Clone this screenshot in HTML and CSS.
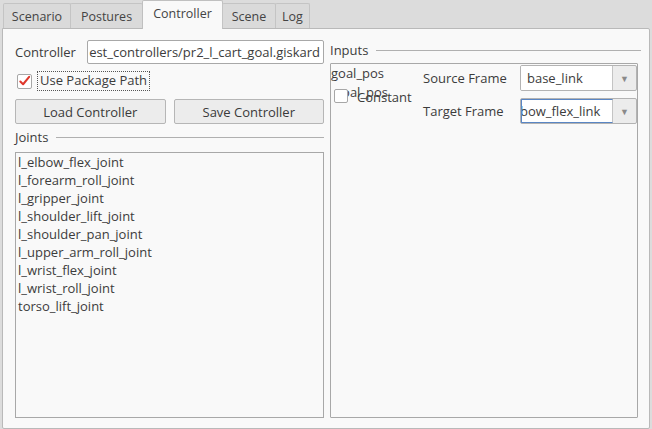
FILE: index.html
```html
<!DOCTYPE html>
<html>
<head>
<meta charset="utf-8">
<link rel="stylesheet" href="styles.css">
</head>
<body>
<div class="window">
  <div class="tabbar">
    <div class="tab t-scenario">Scenario</div>
    <div class="tab t-postures">Postures</div>
    <div class="tab active t-controller">Controller</div>
    <div class="tab t-scene">Scene</div>
    <div class="tab t-log">Log</div>
  </div>
  <div class="pane">
    <div class="col left">
      <div class="row ctl-row">
        <span class="lbl">Controller</span>
        <div class="lineedit"><span class="le-text">est_controllers/pr2_l_cart_goal.giskard</span></div>
      </div>
      <div class="row chk-row">
        <span class="checkbox checked">
          <svg width="14" height="14" viewBox="0 0 14 14"><path d="M2.5 7.5 L5.5 10.5 L12 2.5" fill="none" stroke="#df382c" stroke-width="2.2" stroke-linecap="round" stroke-linejoin="round"/></svg>
        </span>
        <span class="focus">Use Package Path</span>
      </div>
      <div class="row btn-row">
        <div class="btn">Load Controller</div>
        <div class="btn">Save Controller</div>
      </div>
      <div class="group-title"><span>Joints</span><i></i></div>
      <div class="listbox">
        <div>l_elbow_flex_joint</div>
        <div>l_forearm_roll_joint</div>
        <div>l_gripper_joint</div>
        <div>l_shoulder_lift_joint</div>
        <div>l_shoulder_pan_joint</div>
        <div>l_upper_arm_roll_joint</div>
        <div>l_wrist_flex_joint</div>
        <div>l_wrist_roll_joint</div>
        <div>torso_lift_joint</div>
      </div>
    </div>
    <div class="col right">
      <div class="group-title inputs-title"><span>Inputs</span><i></i></div>
      <div class="inputs-box">
        <div class="input-item">
          <div class="ii-left">
            <div class="ii-name">goal_pos</div>
            <span class="ghost">goal_pos</span>
            <div class="ii-const">
              <span class="checkbox small"></span>
              <span class="const-lbl">Constant</span>
            </div>
          </div>
          <div class="ii-form">
            <div class="frow">
              <span class="flbl">Source Frame</span>
              <div class="combo"><span class="ctext">base_link</span><span class="carrow">▼</span></div>
            </div>
            <div class="frow">
              <span class="flbl">Target Frame</span>
              <div class="combo focused"><span class="ctext clip"><span class="cinner">bow_flex_link</span></span><span class="carrow">▼</span></div>
            </div>
          </div>
        </div>
      </div>
    </div>
  </div>
</div>
</body>
</html>
```
FILE: styles.css
```css
* { box-sizing: border-box; }
html, body {
  margin: 0;
  padding: 0;
  width: 652px;
  height: 429px;
  background: #dcdcdc;
  font-family: "Open Sans", "Noto Sans", sans-serif;
  font-size: 12.5px;
  color: #3c3c3c;
  overflow: hidden;
}
.window {
  display: flex;
  flex-direction: column;
  width: 652px;
  height: 429px;
  padding: 0 2px 0 2px;
}
.tabbar {
  display: flex;
  align-items: flex-end;
  height: 28px;
  padding-left: 1px;
  position: relative;
  z-index: 2;
}
.tab {
  height: 25px;
  display: flex;
  align-items: center;
  justify-content: center;
  background: #dadada;
  border: 1px solid #c4c4c4;
  border-bottom: none;
  border-radius: 2px 2px 0 0;
  margin-right: -1px;
  color: #444;
  font-size: 12.5px;
}
.t-scenario { width: 68px; }
.t-postures { width: 73px; }
.t-controller { width: 81px; }
.t-scene { width: 54px; }
.t-log { width: 35px; }
.tab.active {
  background: #f9f9f9;
  border-color: #c0c0c0;
  padding-bottom: 4px;
  margin-bottom: -1px;
  height: 29px;
}
.pane {
  flex: 1;
  background: #f9f9f9;
  border: 1px solid #b9b9b9;
  border-radius: 0 2px 2px 2px;
  display: flex;
  padding: 11px 11px 10px 12px;
  gap: 6px;
}
.col { display: flex; flex-direction: column; }
.left { width: 309px; }
.right { flex: 1; padding-top: 2px; }
.row { display: flex; align-items: center; }
.ctl-row { height: 24px; gap: 11px; }
.lbl { padding-left: 0px; font-size: 13px; }
.lineedit {
  flex: 1;
  height: 24px;
  border: 1px solid #a8a8a8;
  border-radius: 2px;
  background: #fff;
  overflow: hidden;
  display: flex;
  align-items: center;
  justify-content: flex-end;
  padding-right: 3px;
  white-space: nowrap;
  font-size: 13px;
}
.chk-row { margin-top: 6px; height: 22px; gap: 5px; padding-left: 2px; }
.checkbox {
  width: 15px;
  height: 15px;
  border: 1px solid #a7a7a7;
  border-radius: 2px;
  background: #fff;
  display: inline-flex;
  align-items: center;
  justify-content: center;
  position: relative;
  z-index: 1;
}
.checkbox svg { display: block; }
.focus {
  border: 1px dotted #555;
  padding: 1px 2px 2px 2px;
  font-size: 13px;
  line-height: 15px;
}
.btn-row { margin-top: 7px; gap: 8px; }
.btn {
  flex: 1;
  height: 25px;
  border: 1px solid #b6b6b6;
  border-radius: 2px;
  background: #ececec;
  display: flex;
  align-items: center;
  justify-content: center;
  font-size: 13px;
  color: #3a3a3a;
}
.group-title {
  display: flex;
  align-items: center;
  gap: 8px;
  margin-top: 5px;
  height: 16px;
  font-size: 13px;
}
.group-title i {
  flex: 1;
  height: 1px;
  background: #b0b0b0;
  margin-top: 1px;
}
.listbox {
  flex: 1;
  margin-top: 7px;
  border: 1px solid #a8a8a8;
  background: #f9f9f9;
  padding: 0px 2px;
  font-size: 13px;
  line-height: 18px;
}
.inputs-title { margin-top: 0; margin-right: -3px; }
.inputs-box {
  flex: 1;
  margin-top: 5px;
  border: 1px solid #a8a8a8;
  border-radius: 1px;
}
.input-item { display: flex; }
.ii-left { width: 92px; position: relative; padding-top: 0px; }
.ii-name { font-size: 13px; line-height: 18px; }
.ghost {
  position: absolute;
  left: 4px;
  top: 19px;
  font-size: 13px;
  line-height: 18px;
}
.ii-const { display: flex; align-items: center; margin-top: 7px; padding-left: 3px; position: relative; }
.checkbox.small { width: 14px; height: 14px; }
.const-lbl {
  position: absolute;
  left: 26px;
  top: -1px;
  font-size: 13px;
  line-height: 18px;
}
.ii-form { flex: 1; display: flex; flex-direction: column; gap: 7px; padding-top: 1px; padding-right: 0px; }
.frow { display: flex; align-items: center; }
.flbl { width: 97px; font-size: 13px; }
.combo {
  flex: 1;
  height: 26px;
  border: 1px solid #b3b3b3;
  border-radius: 2px;
  background: #ececec;
  display: flex;
  align-items: stretch;
  overflow: hidden;
}
.ctext {
  flex: 1;
  background: #fff;
  border-right: 1px solid #c4c4c4;
  display: flex;
  align-items: center;
  padding-left: 6px;
  font-size: 13px;
  white-space: nowrap;
  overflow: hidden;
}
.ctext.clip { padding-left: 0; }
.cinner { margin-left: -2px; }
.combo.focused .ctext { border: 1px solid #5a86c4; border-right-color: #c4c4c4; }
.carrow {
  width: 23px;
  display: flex;
  align-items: center;
  justify-content: center;
  font-size: 9px;
  color: #8a8a8a;
}
```
